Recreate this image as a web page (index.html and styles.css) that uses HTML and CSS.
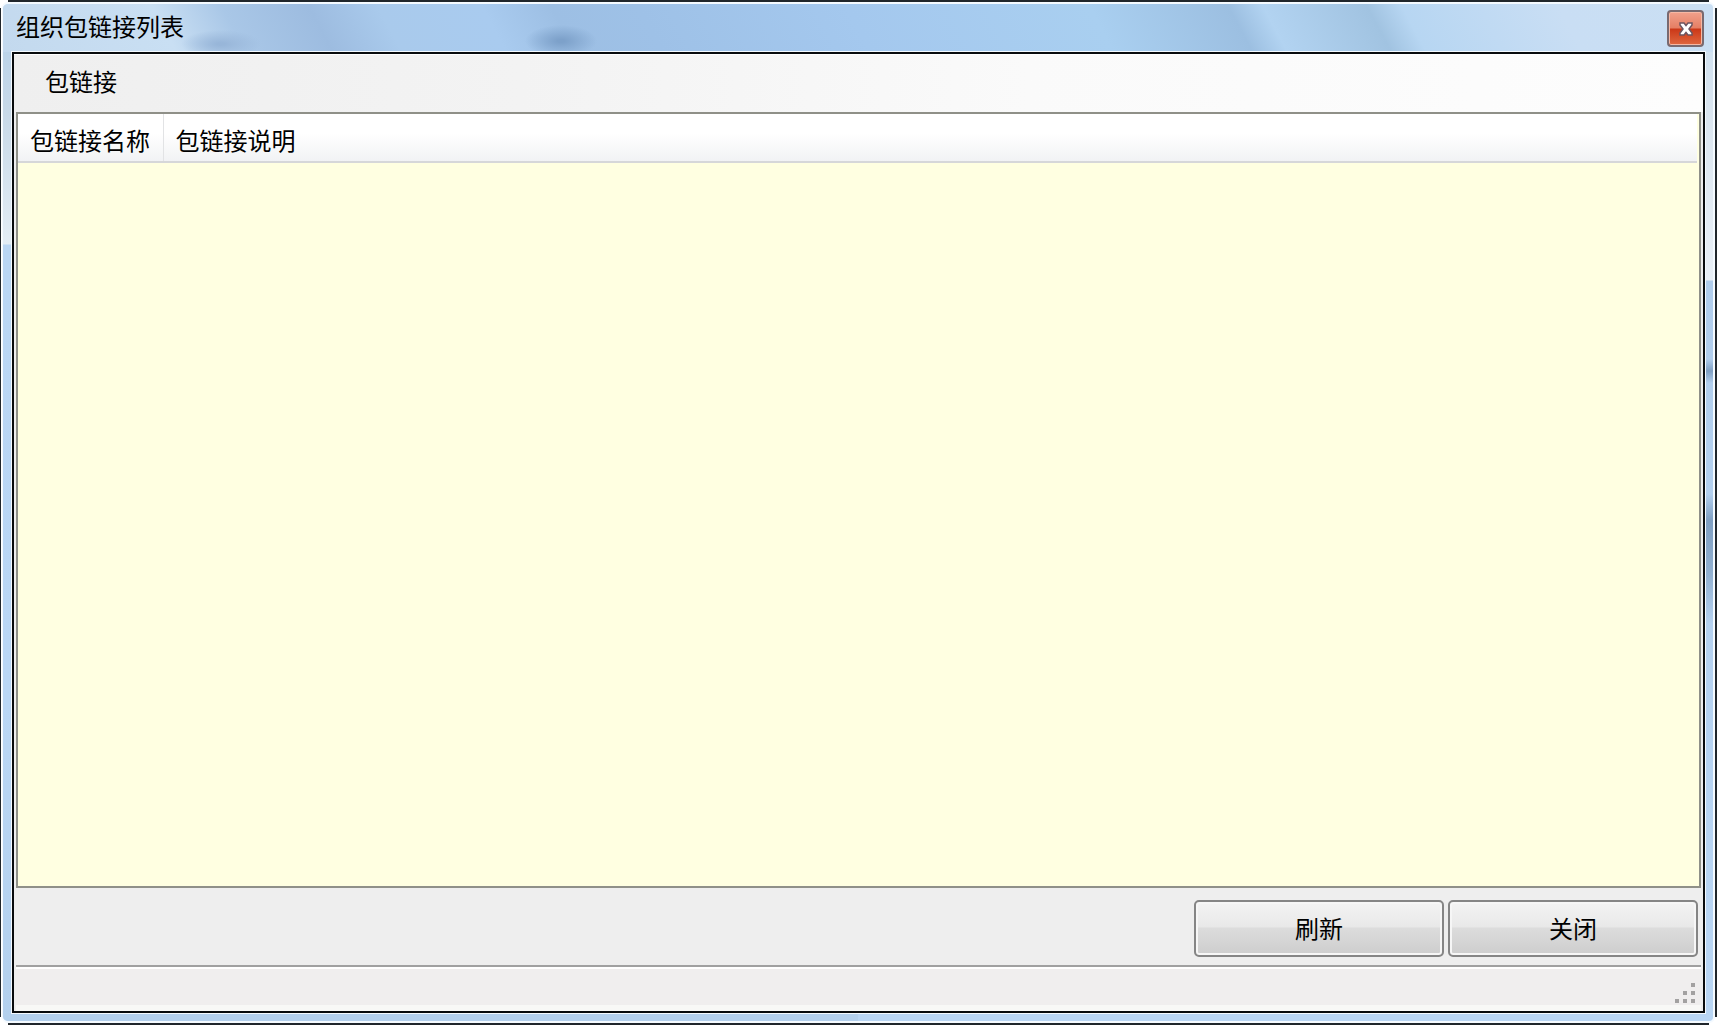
FILE: index.html
```html
<!DOCTYPE html>
<html lang="zh-CN">
<head>
<meta charset="utf-8">
<title>组织包链接列表</title>
<link rel="stylesheet" href="styles.css">
</head>
<body>
<main class="window">
  <div class="glass">
    <header class="titlebar">
      <h1 class="title">组织包链接列表</h1>
      <button class="close" type="button" aria-label="关闭窗口">
        <svg viewBox="0 0 16 14" width="16" height="14" aria-hidden="true">
          <path d="M2 1h4l2 2.500 2-2.500h4v2l-3 4 3 4v2h-4l-2-2.500-2 2.500h-4v-2l3-4-3-4z" fill="#fff" stroke="#6c5560" stroke-width="1.500"/>
        </svg>
      </button>
    </header>
    <div class="client">
      <nav class="menubar">
        <button class="menu-item" type="button">包链接</button>
      </nav>
      <section class="list">
        <table class="grid">
          <thead>
            <tr><th class="col-name" scope="col">包链接名称</th><th scope="col">包链接说明</th></tr>
          </thead>
        </table>
      </section>
      <div class="actions">
        <button class="button" type="button">刷新</button>
        <button class="button" type="button">关闭</button>
      </div>
      <footer class="statusbar">
        <svg class="grip" viewBox="0 0 20 20" width="20" height="20" aria-hidden="true">
          <path d="M16 0h4v4h-4zM8 8h4v4h-4zM16 8h4v4h-4zM0 16h4v4h-4zM8 16h4v4h-4zM16 16h4v4h-4z" fill="#a3a1a1"/>
        </svg>
      </footer>
    </div>
  </div>
</main>
</body>
</html>
```
FILE: styles.css
```css
* {
  box-sizing: border-box;
}

body {
  margin: 0;
  background: #fff;
  color: #000;
  font: 24px/28px "Noto Sans CJK SC", sans-serif;
}

button {
  font: inherit;
  color: inherit;
  padding: 0;
}

/* Dark outer edge, left open at the four corners */
.window {
  display: flex;
  min-height: 100vh;
  padding: 2px;
  background:
    linear-gradient(#20262b, #20262b) center top / calc(100% - 16px) 2px no-repeat,
    linear-gradient(#20262b, #20262b) center bottom / calc(100% - 16px) 2px no-repeat,
    linear-gradient(#20262b, #20262b) left center / 1px calc(100% - 16px) no-repeat,
    linear-gradient(#20262b, #20262b) right center / 2px calc(100% - 16px) no-repeat,
    #fff;
}

/* Translucent frame with the blurred desktop showing through */
.glass {
  flex: 1;
  display: flex;
  flex-direction: column;
  min-width: 0;
  padding: 0 8px 8px 9px;
  border: 2px solid #f4faff;
  border-left-width: 1px;
  border-radius: 6px;
  background:
    radial-gradient(ellipse 36px 16px at 558px 37px, #7da1ca 10%, #7da1ca00) no-repeat,
    radial-gradient(ellipse 40px 14px at 218px 40px, #98b6d9 10%, #98b6d900) no-repeat,
    linear-gradient(#7f9fc200, #7f9fc2, #91b0d000) right 355px / 8px 24px no-repeat,
    linear-gradient(#7f9fc200, #7f9fc2 20%, #91b0d0 60%, #a7c4e200) right 490px / 8px 130px no-repeat,
    linear-gradient(62deg, #c3d9ee 0, #c9dff3 10%, #a9c7e7 14%, #9dbce0 19%, #a9caec 23%, #a9cbef 29%, #9dbfe4 33%, #9ec1e7 38%, #a4c8ee 50%, #a9cff0 64%, #9cbfe1 72%, #b2d3f1 74%, #a1c3e1 80%, #b7d6f2 82%, #c9def4 91%, #cadff3 100%) top / 100% 48px no-repeat,
    linear-gradient(#cbdff0, #dbe6f0 120px, #e8eff6 276px, #b0cdec 277px, #b9d6f4) right top / 50% 100% no-repeat,
    linear-gradient(#b3d0ea, #c8d9e8 110px, #e3edf5 240px, #b9d6f4 241px, #bad7f5 700px, #b3d0ed);
}

.titlebar {
  display: flex;
  align-items: flex-start;
  justify-content: space-between;
  height: 48px;
  padding: 0 1px 0 4px;
}

.title {
  margin: 8px 0 0;
  font-size: 24px;
  font-weight: 400;
  line-height: 28px;
}

.close {
  display: flex;
  align-items: center;
  justify-content: center;
  width: 37px;
  height: 37px;
  margin-top: 6px;
  border: 2px solid #796a70;
  border-radius: 4px;
  background: linear-gradient(#f1a18c, #e57f64 48%, #cb3818 52%, #df6840);
  box-shadow: inset 0 0 0 1px #f6b8a4;
}

.client {
  flex: 1;
  display: flex;
  flex-direction: column;
  padding: 0 2px;
  border: 2px solid #080b0d;
  outline: 1px solid #f4faff;
  background: #eee;
}

.menubar {
  height: 58px;
  margin: 0 -2px;
  padding: 12px 31px;
  border-top: 1px solid #fff;
  background: linear-gradient(90deg, #efefef, #f3f3f3 30%, #fafafa 60%, #fdfdfd);
}

.menu-item {
  display: block;
  border: 0;
  background: none;
}

.list {
  flex: 1;
  border: 2px solid #8f9088;
  padding-right: 2px;
  background: #ffffe1;
}

.grid {
  width: 100%;
  border-collapse: collapse;
  background: linear-gradient(#fff 40%, #f1f2f4);
}

.grid th {
  height: 48px;
  padding: 4px 12px 0;
  border-bottom: 2px solid #d6d7d9;
  font-weight: 400;
  text-align: left;
}

.grid .col-name {
  width: 145px;
  border-right: 1px solid #e2e3e5;
  white-space: nowrap;
}

.actions {
  display: flex;
  justify-content: flex-end;
  gap: 4px;
  padding: 12px 3px 8px;
}

.button {
  width: 250px;
  height: 57px;
  padding-bottom: 2px;
  border: 2px solid #858585;
  border-radius: 5px;
  background: linear-gradient(#f3f3f3, #e9e9e9 46%, #dcdcdc 50%, #cdcdcd);
  box-shadow: inset 0 0 0 2px #f6f6f6;
}

.statusbar {
  display: flex;
  align-items: flex-end;
  justify-content: flex-end;
  height: 46px;
  padding: 0 6px 8px 0;
  border-top: 2px solid #a0a0a0;
  background: linear-gradient(#fff 2px, #f0eeee 2px, #f0eeee 38px, #f8f8f6 38px);
}
```
